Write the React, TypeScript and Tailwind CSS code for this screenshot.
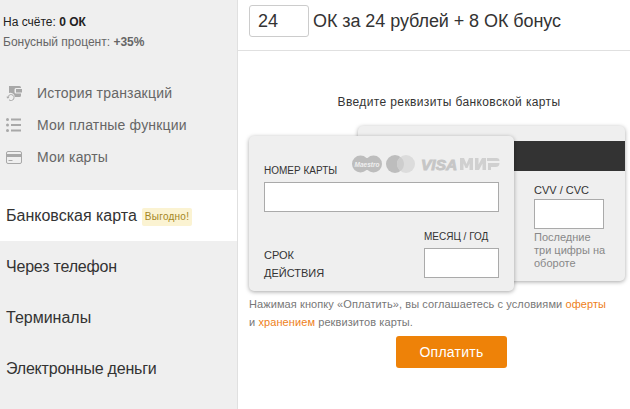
function TxIcon() {
  return (
    <svg width="17" height="16" viewBox="0 0 17 16" className="block">
      <path d="M3 1h10.500A1.500 1.500 0 0 1 15 2.500V3h-5a1.500 1.500 0 0 0-1.500 1.500v2.500A1.500 1.500 0 0 0 10 8.500h5v2a1.500 1.500 0 0 1-1.500 1.500H8.800A4.500 4.500 0 0 0 3 8z" fill="#a8a8a8" />
      <rect x="10" y="4" width="6" height="3.500" fill="#a8a8a8" />
      <path d="M2 12.500a3 3 0 1 1 1 2.300" fill="none" stroke="#a8a8a8" strokeWidth="1" />
      <path d="M0.300 11.800h3.200l-1.600 1.900z" fill="#a8a8a8" />
    </svg>
  );
}
function ListIcon() {
  return (
    <svg width="15" height="14" viewBox="0 0 15 14" className="block">
      {[1.5, 7, 12.5].map((y) => (
        <g key={y}>
          <circle cx="1.500" cy={y} r="1.500" fill="#a8a8a8" />
          <rect x="5" y={y - 1} width="10" height="2" fill="#a8a8a8" />
        </g>
      ))}
    </svg>
  );
}
function CardIcon() {
  return (
    <svg width="16" height="13" viewBox="0 0 16 13" className="block">
      <rect x="0.500" y="0.500" width="15" height="12" rx="1.500" fill="none" stroke="#a8a8a8" />
      <rect x="0.500" y="3" width="15" height="3" fill="#a8a8a8" />
      <rect x="2.500" y="9" width="4" height="1" fill="#a8a8a8" />
    </svg>
  );
}
function Logos() {
  return (
    <svg width="148" height="20" viewBox="0 0 148 20" className="block">
      <circle cx="8.500" cy="10" r="8.500" fill="#bdbdbd" />
      <circle cx="21.500" cy="10" r="8.500" fill="#bdbdbd" />
      <rect x="12" y="4" width="6" height="12" fill="#bdbdbd" />
      <text x="15" y="12.500" textAnchor="middle" fontSize="6.500" fontWeight="700" fontStyle="italic" fill="#efefef" fontFamily="Liberation Sans, sans-serif">Maestro</text>
      <circle cx="43" cy="10" r="9" fill="#bdbdbd" />
      <circle cx="54" cy="10" r="9" fill="#dcdcdc" />
      <path d="M48.500 2.900a9 9 0 0 1 0 14.200a9 9 0 0 1 0-14.200z" fill="#cdcdcd" />
      <text x="69" y="16" fontSize="15.500" fontWeight="700" fontStyle="italic" stroke="#c6c6c6" strokeWidth="0.900" fill="#c6c6c6" fontFamily="Liberation Sans, sans-serif">VISA</text>
      <path d="M108 16V4h4l2.500 6L117 4h4v12h-3.500V9.500L115.500 14h-2l-2-4.500V16z M123 16V4h3.500v6.500L130 4h4v12h-3.500V9.500L127 16z" fill="#d0d0d0" />
      <path d="M135 4h9.500a3 3 0 0 1 3 3H135z M136 9h11.500a4 4 0 0 1-4 4H139v3h-3z" fill="#d0d0d0" />
    </svg>
  );
}

export default function App() {
  return (
    <div className="flex h-[409px] w-[630px] overflow-hidden bg-white text-[#333] font-['Liberation_Sans',Arial,sans-serif]">
      <aside className="flex h-full w-[238px] shrink-0 flex-col border-r border-[#e0e0e0] bg-[#efefef]">
        <div className="pl-[3px] pt-[14px] text-[12px]">
          <div className="h-[18px] leading-[16px] text-[#222]">На счёте: <b>0 ОК</b></div>
          <div className="leading-[20px] text-[#666]">Бонусный процент: <b>+35%</b></div>
        </div>
        <nav className="mt-[25px] flex flex-col text-[14px] tracking-[0.18px] text-[#666]">
          {[
            [<TxIcon key="a" />, "История транзакций"],
            [<ListIcon key="b" />, "Мои платные функции"],
            [<CardIcon key="c" />, "Мои карты"],
          ].map(([icon, label], i) => (
            <div key={i} className="flex h-[32px] items-center">
              <div className="flex w-[37px] justify-start pl-[6px]">{icon}</div>
              <span>{label}</span>
            </div>
          ))}
        </nav>
        <div className="mt-[17px] flex flex-col text-[16px] text-[#333]">
          <div className="flex h-[51px] items-center bg-white pl-[6px]">
            <span>Банковская карта</span>
            <span className="ml-[5px] mt-[3px] rounded-[2px] bg-[#fbf3d2] px-[3px] py-[2px] text-[10px] leading-[14px] tracking-[0.25px] text-[#a4861f]">Выгодно!</span>
          </div>
          <div className="flex h-[51px] items-center pl-[6px] tracking-[-0.2px]">Через телефон</div>
          <div className="flex h-[51px] items-center pl-[6px]">Терминалы</div>
          <div className="flex h-[51px] items-center pl-[6px] tracking-[-0.2px]">Электронные деньги</div>
        </div>
      </aside>
      <main className="flex min-w-0 flex-1 flex-col">
        <div className="flex h-[51px] shrink-0 items-start border-b border-[#e0e0e0] pl-[11px] pt-[5px]">
          <div className="flex h-[32px] w-[60px] items-center rounded-[3px] border border-[#ccc] pl-[8px] text-[18px] text-[#333]">24</div>
          <span className="ml-[4px] text-[18px] leading-[32px] tracking-[-0.07px] text-[#333]">ОК за 24 рублей + 8 ОК бонус</span>
        </div>
        <div className="mt-[42px] h-[18px] pl-[30px] text-center text-[12px] leading-[18px] tracking-[0.38px] text-[#333]">Введите реквизиты банковской карты</div>
        <div className="relative mt-[15px] h-[165px] shrink-0">
          <div className="absolute left-[120px] top-0 h-[155px] w-[267px] rounded-[5px] bg-[#efefef] shadow-[0_1px_4px_rgba(0,0,0,0.35)]">
            <div className="mt-[15px] h-[30px] bg-[#333]" />
            <div className="ml-[176px] mt-[11px] h-[17px] text-[11px] leading-[16px] text-[#333]">CVV / CVC</div>
            <div className="ml-[176px] h-[30px] w-[70px] border border-[#aaa] bg-white" />
            <div className="ml-[176px] mt-[2px] text-[11px] leading-[13px] text-[#888]">Последние<br />три цифры на<br />обороте</div>
          </div>
          <div className="absolute left-[11px] top-[10px] h-[155px] w-[265px] rounded-[5px] bg-[#efefef] px-[15px] shadow-[0_1px_4px_rgba(0,0,0,0.35)]">
            <div className="flex h-[46px] items-end justify-between">
              <span className="pb-[3px] text-[10px] leading-[16px] text-[#333]">НОМЕР КАРТЫ</span>
              <div className="mb-[8px] mr-[-1px]"><Logos /></div>
            </div>
            <div className="h-[30px] w-[235px] border border-[#aaa] bg-white" />
            <div className="mt-[16px] flex justify-between">
              <div className="mt-[18px] text-[11px] leading-[18px] text-[#333]">СРОК<br />ДЕЙСТВИЯ</div>
              <div className="w-[75px]">
                <div className="h-[20px] pt-[1px] text-[10px] leading-[16px] text-[#333]">МЕСЯЦ / ГОД</div>
                <div className="h-[30px] border border-[#aaa] bg-white" />
              </div>
            </div>
          </div>
        </div>
        <div className="ml-[11px] mt-[4px] text-[11px] leading-[18px] tracking-[0.09px] text-[#777]">
          <div>Нажимая кнопку «Оплатить», вы соглашаетесь с условиями <span className="text-[#ee7f1a]">оферты</span></div>
          <div>и <span className="text-[#ee7f1a]">хранением</span> реквизитов карты.</div>
        </div>
        <div className="ml-[158px] mt-[5px] flex h-[32px] w-[111px] items-center justify-center rounded-[3px] bg-[#ee8208] text-[14px] tracking-[0.25px] text-white">Оплатить</div>
      </main>
    </div>
  );
}
